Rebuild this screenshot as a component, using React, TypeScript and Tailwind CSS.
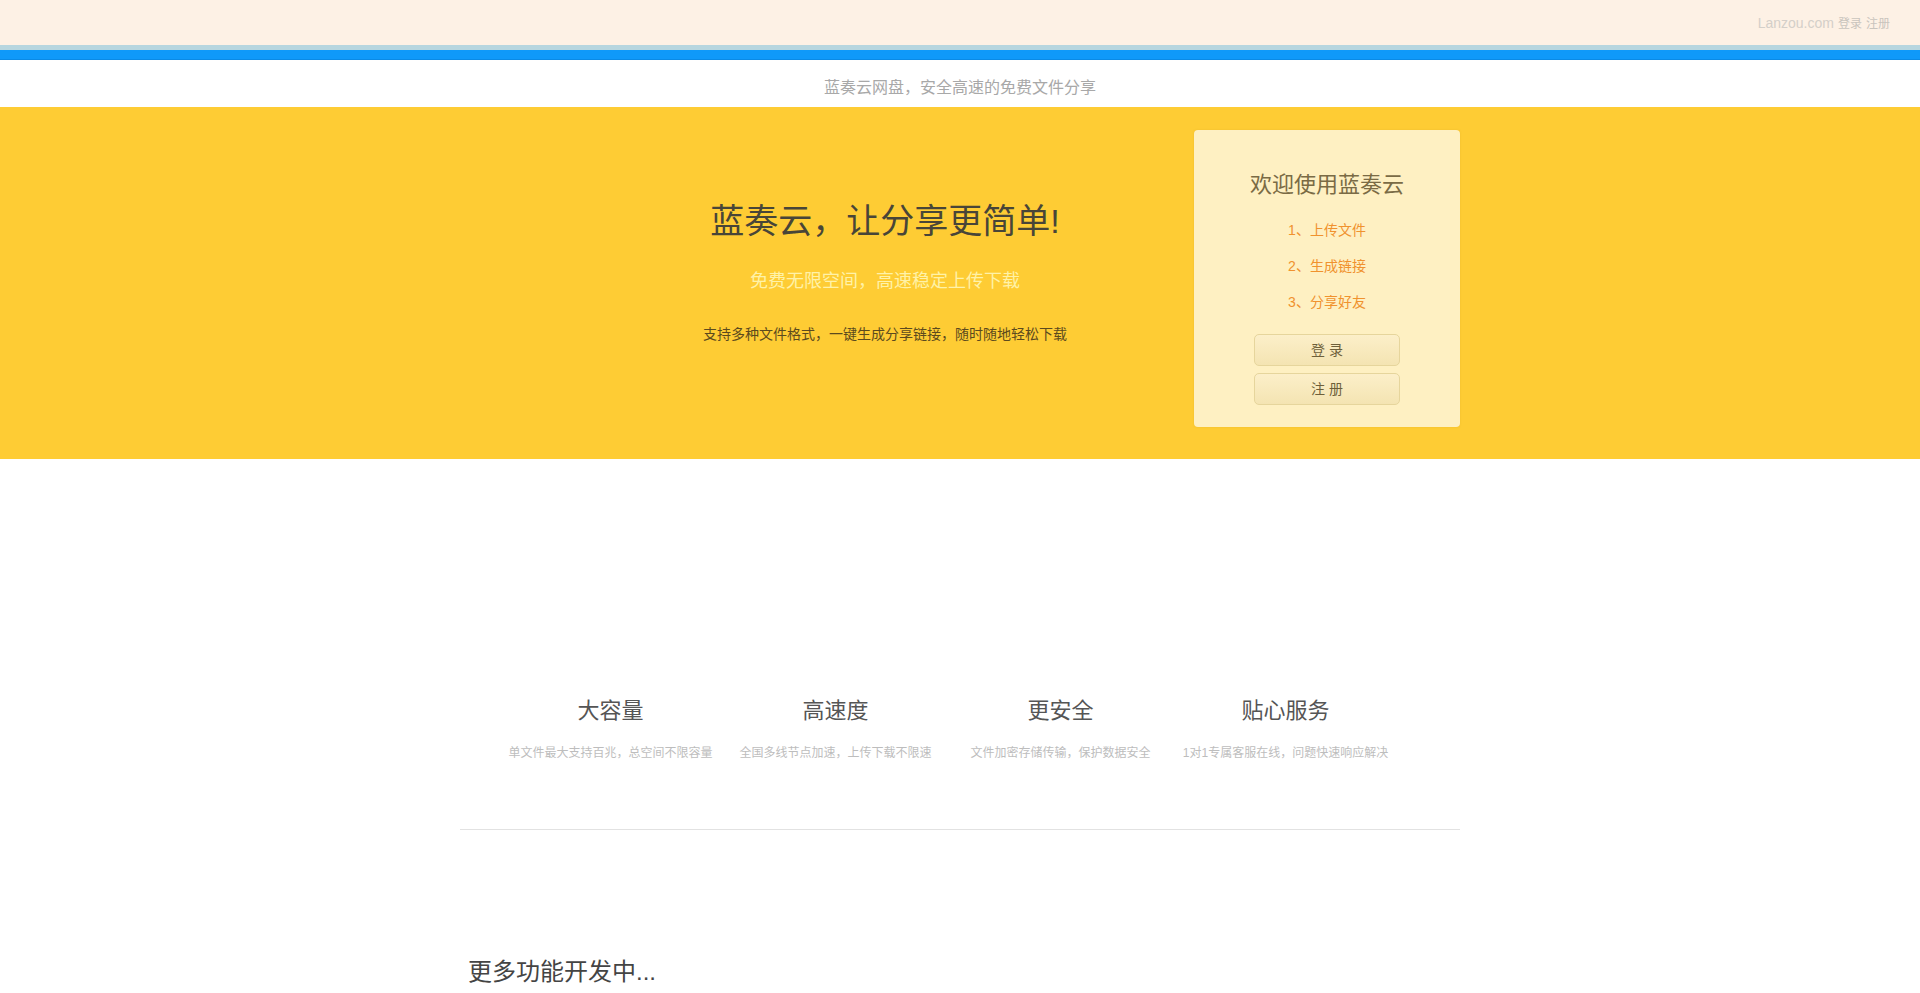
const features = [
  { title: "大容量", desc: "单文件最大支持百兆，总空间不限容量" },
  { title: "高速度", desc: "全国多线节点加速，上传下载不限速" },
  { title: "更安全", desc: "文件加密存储传输，保护数据安全" },
  { title: "贴心服务", desc: "1对1专属客服在线，问题快速响应解决" },
];

const steps = ["1、上传文件", "2、生成链接", "3、分享好友"];

function App() {
  return (
    <div className="min-h-screen bg-white font-['Liberation_Sans','Noto_Sans_CJK_SC',sans-serif]">
      {/* top bar */}
      <div className="h-[45px] bg-[#fdf1e5] flex items-center justify-end pr-[30px] pt-[2px] text-[14px] text-[#d4cfc9]">
        <span>Lanzou.com</span>
        <a className="ml-[4px] text-[12px] text-[#c9c4bd]">登录</a>
        <a className="ml-[4px] text-[12px] text-[#c9c4bd]">注册</a>
      </div>
      <div className="h-[5px] bg-[#b7d6df]" />
      <div className="h-[10px] bg-[#0f99f9] border-b border-[#0a8ae6]" />

      {/* nav title */}
      <div className="h-[47px] flex items-center justify-center pt-[8px] text-[16px] text-[#a8a8a8]">
        蓝奏云网盘，安全高速的免费文件分享
      </div>

      {/* hero */}
      <div className="h-[352px] bg-[#fecc34]">
        <div className="w-[1000px] mx-auto flex pt-[23px]">
          <div className="w-[733px] pl-[117px] text-center">
            <h1 className="mt-[71px] text-[34px] leading-[40px] text-[#484538]">
              蓝奏云，让分享更简单!
            </h1>
            <p className="mt-[28px] text-[18px] leading-[24px] text-[#fff2a8]">
              免费无限空间，高速稳定上传下载
            </p>
            <p className="mt-[31px] text-[14px] leading-[20px] text-[#5c4a1e]">
              支持多种文件格式，一键生成分享链接，随时随地轻松下载
            </p>
          </div>
          <div className="ml-auto w-[266px] h-[297px] rounded-[4px] bg-[#fef0c2] shadow-[0_0_2px_rgba(200,160,40,0.35)] flex flex-col items-center pt-[40px]">
            <h2 className="text-[22px] leading-[30px] text-[#7a6b45]">
              欢迎使用蓝奏云
            </h2>
            <div className="mt-[12px] flex flex-col items-center">
              {steps.map((s) => (
                <div key={s} className="leading-[36px] text-[14px] text-[#f0922e]">
                  {s}
                </div>
              ))}
            </div>
            <button className="mt-[14px] w-[146px] h-[32px] rounded-[5px] border border-[#e6d59c] bg-gradient-to-b from-[#fcefc9] to-[#f4e4b2] text-[14px] text-[#6e5f3a]">
              登 录
            </button>
            <button className="mt-[7px] w-[146px] h-[32px] rounded-[5px] border border-[#e6d59c] bg-gradient-to-b from-[#fcefc9] to-[#f4e4b2] text-[14px] text-[#6e5f3a]">
              注 册
            </button>
          </div>
        </div>
      </div>

      {/* features */}
      <div className="w-[1000px] mx-auto">
        <div className="flex pl-[38px] pt-[237px]">
          {features.map((f) => (
            <div key={f.title} className="w-[225px] flex flex-col items-center">
              <h3 className="text-[22px] leading-[30px] text-[#555555]">{f.title}</h3>
              <p className="mt-[18px] text-[12px] leading-[18px] text-[#bdbdbd] whitespace-nowrap">
                {f.desc}
              </p>
            </div>
          ))}
        </div>
        <div className="mt-[67px] border-t border-[#e2e2e2]" />
        <div className="mt-[126px] pl-[8px] text-[24px] leading-[32px] text-[#444444]">
          更多功能开发中...
        </div>
      </div>
    </div>
  );
}

export default App;
